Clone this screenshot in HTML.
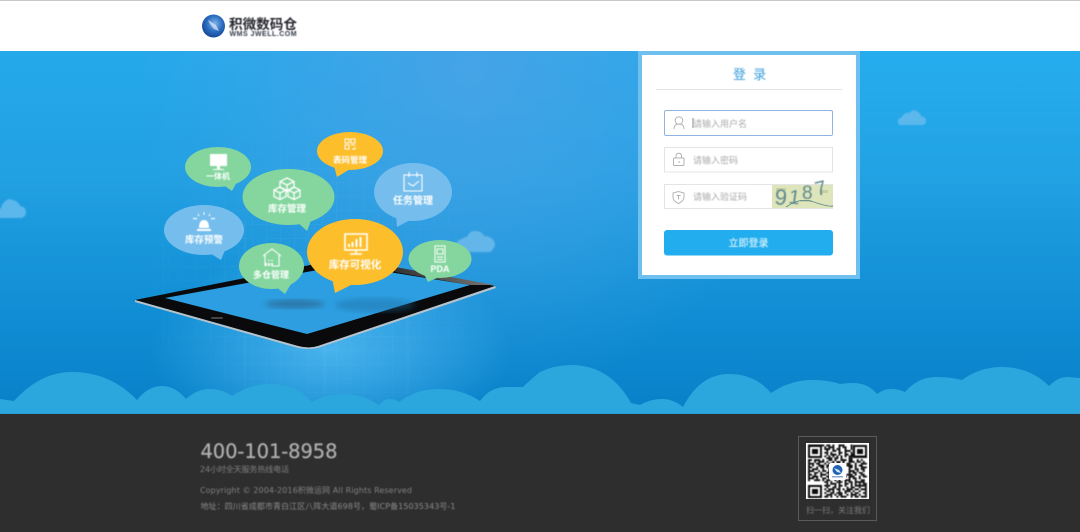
<!DOCTYPE html>
<html lang="zh-CN"><head><meta charset="utf-8"><title>积微数码仓</title>
<style>
html,body{margin:0;padding:0;width:1080px;height:532px;overflow:hidden;background:#2e2e2e}
svg{display:block}
text{font-family:"Liberation Sans","Noto Sans CJK SC",sans-serif}
.b{font-weight:700;fill:#fff;text-anchor:middle}
.w{fill:none;stroke:#fff;stroke-width:1.3}
.ph{font-size:9px;fill:#aaa}
.d{font-family:"DejaVu Sans","Noto Sans CJK SC",sans-serif}
</style></head><body>
<svg width="1080" height="532" viewBox="0 0 1080 532" xmlns="http://www.w3.org/2000/svg">
<defs>
<linearGradient id="bg" x1="0" y1="0" x2="0" y2="1"><stop offset="0" stop-color="#25a9eb"/><stop offset=".35" stop-color="#21a0e2"/><stop offset=".75" stop-color="#0f8cd3"/><stop offset="1" stop-color="#0880c8"/></linearGradient>
<linearGradient id="bgr" x1="0" y1="0" x2="1" y2="0"><stop offset=".6" stop-color="#28b4f4" stop-opacity="0"/><stop offset=".8" stop-color="#28b4f4" stop-opacity=".45"/><stop offset="1" stop-color="#28b4f4" stop-opacity=".45"/></linearGradient>
<linearGradient id="fade" x1="0" y1="0" x2="0" y2="1"><stop offset="0" stop-color="#fff"/><stop offset=".55" stop-color="#000"/></linearGradient>
<mask id="mt"><rect width="1080" height="415" fill="url(#fade)"/></mask>
<radialGradient id="g1" gradientUnits="userSpaceOnUse" cx="470" cy="70" r="330"><stop offset="0" stop-color="#4aa3e6" stop-opacity=".85"/><stop offset="1" stop-color="#4aa3e6" stop-opacity="0"/></radialGradient>
<radialGradient id="g2" gradientUnits="userSpaceOnUse" cx="330" cy="350" r="180" gradientTransform="translate(0 150) scale(1 .57)"><stop offset="0" stop-color="#56bdf4" stop-opacity=".8"/><stop offset="1" stop-color="#56bdf4" stop-opacity="0"/></radialGradient>
<linearGradient id="scr" x1="0" y1="0" x2="0" y2="1"><stop offset="0" stop-color="#2a9fe2"/><stop offset="1" stop-color="#2f9ee0"/></linearGradient>
<radialGradient id="globe" cx=".55" cy=".4" r=".7"><stop offset="0" stop-color="#7fb4ea"/><stop offset=".5" stop-color="#2a6cc0"/><stop offset="1" stop-color="#103c86"/></radialGradient>
<linearGradient id="grey" x1="0" y1="0" x2="1" y2="0"><stop offset="0" stop-color="#333"/><stop offset="1" stop-color="#777"/></linearGradient>
<pattern id="grid" width="14" height="14" patternUnits="userSpaceOnUse"><path d="M0 .5h14M.5 0v14" stroke="#fff" stroke-opacity=".05"/></pattern>
<radialGradient id="mg" gradientUnits="userSpaceOnUse" cx="320" cy="280" r="210"><stop offset="0" stop-color="#fff"/><stop offset="1" stop-color="#000"/></radialGradient>
<mask id="m"><rect width="1080" height="532" fill="url(#mg)"/></mask>
<filter id="s1"><feGaussianBlur stdDeviation=".4"/></filter>
<filter id="s2"><feGaussianBlur stdDeviation="3"/></filter>
<filter id="s3"><feGaussianBlur stdDeviation=".8"/></filter>
</defs>

<!-- header -->
<rect width="1080" height="52" fill="#fff"/>
<rect width="1080" height="1" fill="#c8c8c8"/>

<!-- background -->
<rect y="51" width="1080" height="364" fill="url(#bg)"/>
<rect y="51" width="1080" height="364" fill="url(#bgr)" mask="url(#mt)"/>
<rect y="51" width="1080" height="364" fill="url(#g1)"/>
<rect y="51" width="1080" height="364" fill="url(#g2)"/>
<g mask="url(#m)"><rect y="100" x="100" width="460" height="315" fill="url(#grid)"/>
<path d="M163 230V395M245 220V390M325 290V400M408 290V395" stroke="#fff" stroke-opacity=".1" stroke-width="1.5" filter="url(#s3)"/></g>

<!-- small clouds -->
<g fill="#5cb8ec" filter="url(#s3)">
<path d="M899 125q-3-6 3-8q2-5 7-4q5-5 9-1q3 2 3 4q5 1 5 5q0 4-4 4h-20q-2 0-3 0z"/>
<path d="M-2 218v-8q3-1 4-5q5-8 11-5q5 1 7 6q6 1 6 6q0 5-5 6z"/>
<path d="M461 252q-5-1-5-6q0-6 6-7q2-2 5-2q3-7 9-6q6 0 8 5q6 0 9 4q4 4 0 9q-1 3-5 3z" fill="#64b6ea"/>
</g>

<!-- tablet -->
<path d="M135 300L345 258L495 286L318 346Q309 349 298 346Z" fill="#0a0a0c"/>
<path d="M135 300L298 346Q309 349 318 346L495 286L496 288L318 348Q309 350 298 348L135 302Z" fill="#b8c2c9"/>
<path d="M395 267L495 285L470 285L395 272Z" fill="url(#grey)"/>
<path d="M165 298L345 265L470 285L307 334Z" fill="url(#scr)"/>
<ellipse cx="295" cy="304" rx="30" ry="4.500" fill="#2a6a94" opacity=".75" filter="url(#s2)"/>
<ellipse cx="375" cy="305" rx="40" ry="7" fill="#1f6a9e" opacity=".4" filter="url(#s2)"/>
<rect x="211" y="317" width="12" height="2" rx="1" fill="#444"/>

<!-- clouds bottom -->
<path fill="#2ca7de" d="M0 399L14 401Q40 372 72 372Q110 372 137 400Q148 386 162 386Q175 386 186 399Q197 389 210 389Q222 389 232 396Q250 384 272 384Q295 384 312 402Q326 394 344 394Q362 394 379 405Q384 399 389 399Q395 399 399 402Q416 389 439 389Q462 389 480 401Q490 387 506 387L523 387Q530 380 540 372Q555 365 571 365Q610 365 631 403L640 405Q650 399 662 399Q673 399 683 407Q700 374 729 374Q755 374 771 393Q790 380 812 380Q828 380 840 384Q846 383 853 383Q868 383 877 394Q884 389 891 389Q899 389 905 392Q918 377 936 377Q950 377 962 380Q980 367 1001 367Q1030 367 1049 386Q1058 377 1067 377L1080 378V415H0Z"/>

<!-- bubbles -->
<g fill="#84d69e">
<ellipse cx="218" cy="167" rx="33" ry="20"/><path d="M222 184L232 191L238 180Z"/>
<ellipse cx="288.500" cy="197" rx="46" ry="28"/><path d="M295 220L307 231L312 218Z"/>
<ellipse cx="271.500" cy="266" rx="32.500" ry="23"/><path d="M275 286L285 294L291 284Z"/>
<ellipse cx="440" cy="259" rx="31.500" ry="19"/><path d="M424 274L428 282L441 276Z"/>
</g>
<g fill="#74bdec">
<ellipse cx="204" cy="230" rx="40" ry="25"/><path d="M208 252L221 260L225 250Z"/>
<ellipse cx="413" cy="192" rx="39" ry="29"/><path d="M396 214L397 227L412 219Z"/>
</g>
<g fill="#fdbe2c">
<ellipse cx="350" cy="151" rx="33" ry="19"/><path d="M334 166L337 177L350 169Z"/>
<ellipse cx="355" cy="252" rx="48" ry="33"/><path d="M332 278L335 293L355 283Z"/>
</g>

<!-- bubble icons -->
<g filter="url(#s1)">
<g fill="#fff">
<rect x="210" y="154" width="17" height="12"/><rect x="217" y="166" width="3" height="3"/><rect x="213" y="169" width="11" height="1"/>
<path d="M197 229h14v2h-14zM199 228q0-8 5-8t5 8z"/>
<path d="M204 212v3M198 214l1 2M210 214l-1 2" stroke="#fff" stroke-width="1"/>
<rect x="193" y="218" width="4" height="1.200"/><rect x="211" y="218" width="4" height="1.200"/>
</g>
<g class="w">
<path d="M287 178l-7 3.500v6l7 3.500 7-3.500v-6zM280 181.500l7 3.500 7-3.500M287 185v6"/>
<path d="M280 187l-6 3v6.500l6 3 6-3V190zM274 190l6 3 6-3M280 193v6"/>
<path d="M294 187l-6 3v6.500l6 3 6-3V190zM288 190l6 3 6-3M294 193v6"/>
<path d="M263 256l9-7 9 7M265 255v11M279 255v11h-7" stroke-width="1.100"/>
<path d="M269 260v1M272 260v1M266 263v3M269 263v3M272 263v3" stroke-width="1.800"/>
<path d="M345 139h4v4h-4zM351 139h4v4h-4zM345 145h4v4h-4zM351 145h4M355 147v2h-3" stroke-width="1"/>
<path d="M404 175h18v16h-18zM409 172v5M417 172v5M408 183l5 3 6-5" stroke-width="1.100"/>
<path d="M345 234h22v16h-22zM356 250v3M350 254h12" stroke-width="1.600"/>
<path d="M435 246h10v16h-10zM437 249h6v5h-6zM437 257h6M437 259.500h6" stroke-width="1"/>
</g>
<path d="M349 247v-3M352.500 247v-5M356.500 247v-8M360.500 247v-10" stroke="#fff" stroke-width="2" fill="none"/>

<text class="b" x="218" y="179" font-size="8">一体机</text>
<text class="b" x="287" y="212" font-size="9.500">库存管理</text>
<text class="b" x="204" y="243" font-size="9.500">库存预警</text>
<text class="b" x="271" y="278" font-size="9">多仓管理</text>
<text class="b" x="350" y="163" font-size="8.500">表码管理</text>
<text class="b" x="413" y="204" font-size="10">任务管理</text>
<text class="b" x="355" y="268" font-size="10.500">库存可视化</text>
<text class="b" x="440" y="272" font-size="9">PDA</text>
</g>

<!-- logo -->
<circle cx="213.500" cy="26" r="11.500" fill="url(#globe)"/>
<path d="M208 20l8 5 3 6-5-2-4-5z" fill="#cfe0f5" opacity=".8"/>
<g filter="url(#s1)">
<text x="229" y="29" font-size="13.600" font-weight="700" fill="#25282f">积微数码仓</text>
<text x="229.500" y="36" font-size="7" font-weight="700" fill="#33394a" letter-spacing=".5">WMS JWELL.COM</text>
</g>

<!-- login panel -->
<rect x="638" y="51" width="222" height="228" fill="#6fc0ee"/>
<rect x="642" y="55" width="214" height="220" fill="#fff"/>
<rect x="656" y="89" width="186" height="1" fill="#e4e4e4"/>

<rect x="664.500" y="110.500" width="168" height="25" rx="1.500" fill="#fff" stroke="#8fb4e4" stroke-width="1"/>
<rect x="664.500" y="147.500" width="168" height="24.500" fill="#fff" stroke="#e4e4e4"/>
<rect x="664.500" y="184.500" width="168" height="24" fill="#fff" stroke="#e4e4e4"/>

<g fill="none" stroke="#b4b4b4" stroke-width="1">
<circle cx="679" cy="120.500" r="3.800"/><path d="M674 129q0-5 5-5t5 5"/>
<rect x="673.500" y="158" width="10.500" height="7.500" rx="1"/><path d="M676 158v-2.500a2.800 2.800 0 0 1 5.500 0V158"/><path d="M679 161v2" />
<path d="M678.500 191.500l5.500 1.500v4q0 4-5.500 6.500q-5.500-2.500-5.500-6.500v-4zM676.500 195.500h4M678.500 195.500v4"/>
</g>
<rect x="692.500" y="118" width="1" height="10" fill="#888"/>
<g filter="url(#s1)">
<text x="749.500" y="79" font-size="13" fill="#3a9fdc" text-anchor="middle" xml:space="preserve">登  录</text>
<text class="ph" x="693" y="127">请输入用户名</text>
<text class="ph" x="693" y="163.500">请输入密码</text>
<text class="ph" x="693" y="200">请输入验证码</text>
</g>

<!-- captcha -->
<rect x="772" y="185" width="61" height="23" fill="#dfe5bb"/>
<g fill="#c6d0a0"><rect x="776" y="188" width="10" height="3"/><rect x="800" y="200" width="12" height="2"/><rect x="820" y="190" width="8" height="3"/></g>
<g font-size="22" fill="#5f8a8e" font-family="Liberation Sans,sans-serif" filter="url(#s1)">
<text x="774" y="204" transform="rotate(6 774 204)">9</text><text x="788" y="203" transform="rotate(8 788 203)" font-size="20">1</text><text x="802" y="199" font-size="19">8</text><text x="817" y="196" transform="rotate(-14 817 196)" font-size="20">7</text>
</g>
<path d="M786 207q14-10 28-5t19 4" fill="none" stroke="#5f8a8e" stroke-width=".9"/>

<rect x="664" y="230" width="169" height="25.500" rx="3" fill="#22aeee"/>
<text x="748.500" y="246.500" font-size="10" fill="#fff" text-anchor="middle" filter="url(#s1)">立即登录</text>

<!-- footer -->
<rect y="414" width="1080" height="118" fill="#2e2e2e"/>
<rect y="413" width="1080" height="1" fill="#2b9bd0"/>
<g filter="url(#s1)">
<text class="d" x="200.500" y="458" font-size="19.500" fill="#b0b0b0" stroke="#b0b0b0" stroke-width=".2" textLength="137">400-101-8958</text>
<text class="d" x="200" y="472" font-size="8" fill="#808080" textLength="89">24小时全天服务热线电话</text>
<text class="d" x="200" y="493" font-size="8" fill="#808080" textLength="212">Copyright © 2004-2016积微运网 All Rights Reserved</text>
<text class="d" x="200.500" y="509" font-size="8" fill="#8a8a8a" textLength="255">地址：四川省成都市青白江区八阵大道698号，蜀ICP备15035343号-1</text>
</g>

<!-- QR -->
<rect x="798.500" y="436.500" width="78" height="84" fill="none" stroke="#5a5a5a"/>
<rect x="806" y="443" width="63" height="56" fill="#fff"/>
<g filter="url(#s1)">
<g transform="translate(808 444.500) scale(2.030 1.830)" fill="none" stroke="#111" stroke-width="1">
<path d="M0 .5h29" stroke-dasharray="8 1 2 1 1 2 3 3 1 7"/>
<path d="M0 1.500h29" stroke-dasharray="0 8 1 1 3 2 1 1 2 2 1 7"/>
<path d="M0 2.500h29" stroke-dasharray="0 8 3 1 1 1 2 2 1 2 1 7"/>
<path d="M0 3.500h29" stroke-dasharray="0 9 1 2 2 1 1 2 3 1 1 6"/>
<path d="M0 4.500h29" stroke-dasharray="0 8 2 1 1 3 2 1 1 2 1 7"/>
<path d="M0 5.500h29" stroke-dasharray="0 9 1 1 3 1 1 2 2 1 2 6"/>
<path d="M0 6.500h29" stroke-dasharray="0 8 1 1 1 1 1 1 1 1 1 1 1 1 7"/>
<path d="M0 7.500h29" stroke-dasharray="0 9 3 1 2 1 1 3 2 7"/>
<path d="M0 8.500h29" stroke-dasharray="2 1 3 1 1 2 2 1 1 2 3 1 2 2 1 1 1 2"/>
<path d="M0 9.500h29" stroke-dasharray="1 2 1 1 3 1 1 2 1 1 2 1 1 2 3 1 2 1 1"/>
<path d="M0 10.500h29" stroke-dasharray="3 1 2 2 1 1 3 1 2 1 1 1 2 2 1 2 3"/>
<path d="M0 11.500h29" stroke-dasharray="1 1 1 2 3 1 2 2 1 2 1 2 3 1 1 1 2 2"/>
<path d="M0 12.500h29" stroke-dasharray="2 2 1 1 2 1 1 3 1 6 2 1 1 2 3"/>
<path d="M0 13.500h29" stroke-dasharray="1 1 3 2 1 2 1 1 2 6 1 2 2 1 2 1"/>
<path d="M0 14.500h29" stroke-dasharray="3 2 1 1 2 1 2 1 1 6 3 1 1 2 1 1"/>
<path d="M0 15.500h29" stroke-dasharray="1 2 2 1 1 2 3 1 1 6 1 1 2 1 2 2"/>
<path d="M0 16.500h29" stroke-dasharray="2 1 1 2 3 1 1 2 2 1 2 1 3 1 1 2 2 1"/>
<path d="M0 17.500h29" stroke-dasharray="1 1 3 1 1 2 2 1 1 2 1 2 1 1 3 2 1 1 2"/>
<path d="M0 18.500h29" stroke-dasharray="3 1 1 2 2 1 1 1 3 1 2 2 1 1 2 1 1 3"/>
<path d="M0 19.500h29" stroke-dasharray="1 2 3 1 1 1 2 2 1 1 1 2 3 2 1 2 2 1"/>
<path d="M0 20.500h29" stroke-dasharray="0 8 2 1 1 2 3 1 1 1 2 1 5 1"/>
<path d="M0 21.500h29" stroke-dasharray="0 9 1 1 3 1 1 2 2 1 1 1 1 1 1 1 1"/>
<path d="M0 22.500h29" stroke-dasharray="0 8 3 2 1 1 2 1 1 2 1 1 5"/>
<path d="M0 23.500h29" stroke-dasharray="0 9 1 2 2 1 1 3 1 1 2 2 1 2 1"/>
<path d="M0 24.500h29" stroke-dasharray="0 8 1 1 3 1 2 1 1 1 3 1 2 1 3"/>
<path d="M0 25.500h29" stroke-dasharray="0 9 2 1 1 2 1 2 3 1 1 2 1 2 1"/>
<path d="M0 26.500h29" stroke-dasharray="0 8 1 2 2 1 3 1 1 2 1 1 2 2 2"/>
<path d="M0 27.500h29" stroke-dasharray="0 9 3 1 1 1 2 2 1 1 3 1 1 2 1"/>
<path d="M0 28.500h29" stroke-dasharray="0 8 2 1 1 2 1 1 3 2 1 1 2 1 3"/>
</g>
<g fill="#111">
<path fill-rule="evenodd" d="M808 445h14v13h-14zM810 447v9h10v-9zM812 449h6v5h-6z"/>
<path fill-rule="evenodd" d="M853 445h14v13h-14zM855 447v9h10v-9zM857 449h6v5h-6z"/>
<path fill-rule="evenodd" d="M808 485h14v13h-14zM810 487v9h10v-9zM812 489h6v5h-6z"/>
</g>
</g>
<rect x="829" y="463" width="17" height="17" rx="2" fill="#fff"/>
<circle cx="837.500" cy="470" r="5" fill="#1f63b5"/>
<path d="M834 468l5 2 2 3-4-1z" fill="#d6e6f7"/>
<rect x="832" y="476" width="11" height="1.500" fill="#8aa8cc"/>
<text x="838" y="513" font-size="8" fill="#7c7c7c" text-anchor="middle" filter="url(#s1)">扫一扫，关注我们</text>
</svg>
</body></html>
